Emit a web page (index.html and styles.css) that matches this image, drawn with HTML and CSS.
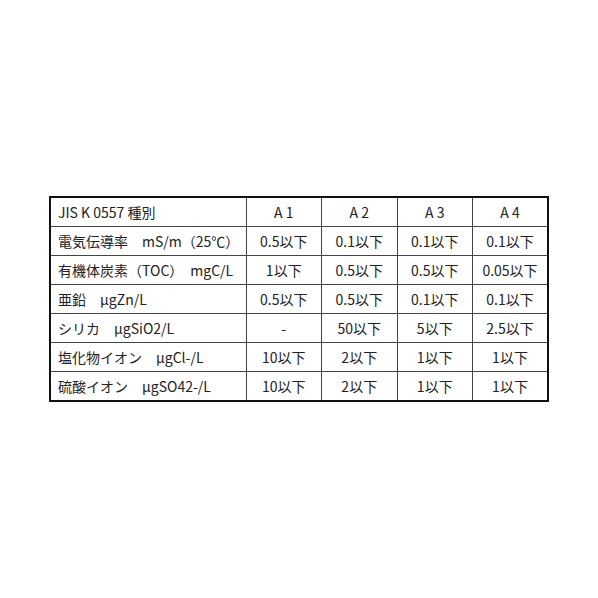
FILE: index.html
```html
<!DOCTYPE html>
<html lang="ja">
<head>
<meta charset="utf-8">
<link rel="stylesheet" href="styles.css">
</head>
<body>
<div class="wrap">
<table class="spec">
<colgroup>
<col class="c-label"><col class="c-a"><col class="c-a"><col class="c-a"><col class="c-a">
</colgroup>
<tr><td class="label">JIS K 0557 種別</td><td>A 1</td><td>A 2</td><td>A 3</td><td>A 4</td></tr>
<tr><td class="label">電気伝導率　mS/m（25℃）</td><td>0.5以下</td><td>0.1以下</td><td>0.1以下</td><td>0.1以下</td></tr>
<tr><td class="label">有機体炭素（TOC）　mgC/L</td><td>1以下</td><td>0.5以下</td><td>0.5以下</td><td>0.05以下</td></tr>
<tr><td class="label">亜鉛　μgZn/L</td><td>0.5以下</td><td>0.5以下</td><td>0.1以下</td><td>0.1以下</td></tr>
<tr><td class="label">シリカ　μgSiO2/L</td><td>-</td><td>50以下</td><td>5以下</td><td>2.5以下</td></tr>
<tr><td class="label">塩化物イオン　μgCl-/L</td><td>10以下</td><td>2以下</td><td>1以下</td><td>1以下</td></tr>
<tr><td class="label">硫酸イオン　μgSO42-/L</td><td>10以下</td><td>2以下</td><td>1以下</td><td>1以下</td></tr>
</table>
</div>
</body>
</html>
```
FILE: styles.css
```css
html, body {
  margin: 0;
  padding: 0;
  background: #fff;
}
.wrap {
  padding: 196px 0 0 49px;
}
.spec {
  border-collapse: collapse;
  table-layout: fixed;
  width: 498px;
  border: 2px solid #111;
  font-family: "Noto Sans CJK JP", "Noto Sans", sans-serif;
  font-size: 14px;
  color: #222;
}
.c-label { width: 196px; }
.c-a { width: 75.5px; }
.spec td {
  border: 1px solid #444;
  height: 28px;
  padding: 0;
  text-align: center;
  line-height: 16px;
  white-space: nowrap;
}
.spec td.label {
  text-align: left;
  padding-left: 7px;
}
```
